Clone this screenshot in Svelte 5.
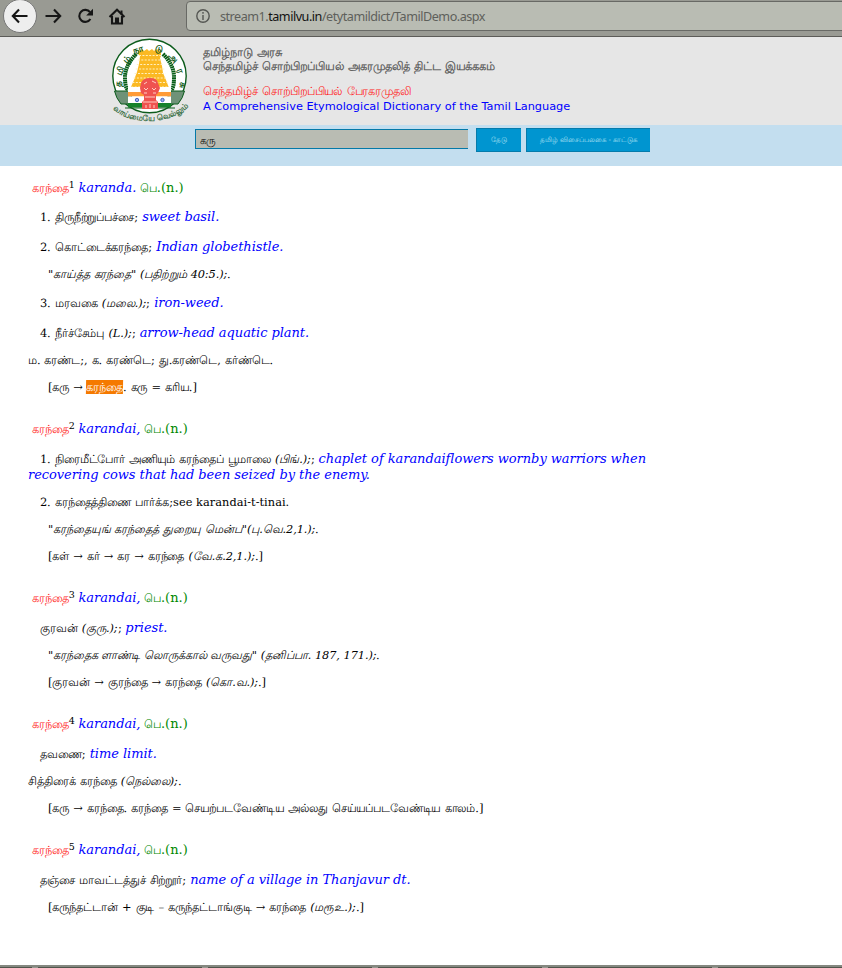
<script>
  const B = (t) => ({ k: 'en', t });
  const T = (t) => ({ k: 'ta', t });
  const I = (t) => ({ k: 'it', t });
  const H = (t) => ({ k: 'hit', t });
  const entries = [
    { n: 1, en: 'karanda.', lines: [
      { c: 'sense big tight', s: [T('1. திருநீற்றுப்பச்சை; '), B('sweet basil.')] },
      { c: 'sense big', s: [T('2. கொட்டைக்கரந்தை; '), B('Indian globethistle.')] },
      { c: 'quote', s: [I('"காய்த்த கரந்தை" (பதிற்றும் 40:5.);'), T('.')] },
      { c: 'sense big tight', s: [T('3. மரவகை '), I('(மலை.);'), T('; '), B('iron-weed.')] },
      { c: 'sense big', s: [T('4. நீர்ச்சேம்பு '), I('(L.);'), T('; '), B('arrow-head aquatic plant.')] },
      { c: 'plain', s: [T('ம. கரண்ட;, க. கரண்டெ; து.கரண்டெ, கர்ண்டெ.')] },
      { c: 'quote', s: [T('[கரு → '), H('கரந்தை'), T('. கரு = கரிய.]')] }
    ] },
    { n: 2, en: 'karandai,', lines: [
      { c: 'sense big', s: [T('1. நிரைமீட்போர் அணியும் கரந்தைப் பூமாலை '), I('(பிங்.);'), T('; '), B('chaplet of karandaiflowers wornby warriors when')] , cont: 'recovering cows that had been seized by the enemy.' },
      { c: 'sense', s: [T('2. கரந்தைத்திணை பார்க்க;'), { k: 'see', t: 'see karandai-t-tinai.' }] },
      { c: 'quote', s: [I('"கரந்தையுங் கரந்தைத் துறையு மென்ப"(பு.வெ.2,1.);'), T('.')] },
      { c: 'quote', s: [T('[கள் → கர் → கர → கரந்தை '), I('(வே.க.2,1.);'), T('.]')] }
    ] },
    { n: 3, en: 'karandai,', lines: [
      { c: 'sense big', s: [T('குரவன் '), I('(குரு.);'), T('; '), B('priest.')] },
      { c: 'quote', s: [I('"கரந்தைக ளாண்டி லொருக்கால் வருவது" (தனிப்பா. 187, 171.);'), T('.')] },
      { c: 'quote', s: [T('[குரவன் → குரந்தை → கரந்தை '), I('(கொ.வ.);'), T('.]')] }
    ] },
    { n: 4, en: 'karandai,', lines: [
      { c: 'sense big', s: [T('தவணை; '), B('time limit.')] },
      { c: 'plain', s: [T('சித்திரைக் கரந்தை '), I('(நெல்லை);'), T('.')] },
      { c: 'quote', s: [T('[கரு → கரந்தை. கரந்தை = செயற்படவேண்டிய அல்லது செய்யப்படவேண்டிய காலம்.]')] }
    ] },
    { n: 5, en: 'karandai,', lines: [
      { c: 'sense big', s: [T('தஞ்சை மாவட்டத்துச் சிற்றூர்; '), B('name of a village in Thanjavur dt.')] },
      { c: 'quote', s: [T('[கருந்தட்டான் + குடி – கருந்தட்டாங்குடி → கரந்தை '), I('(மரூஉ.);'), T('.]')] }
    ] }
  ];
  // glyph, x, y and rotation around the rim of the seal
  const ring = [['த', 16, 47, -88], ['மி', 18, 35, -68], ['ழ்', 24, 24.5, -46], ['நா', 34, 15.5, -18], ['டு', 53.5, 14.5, 14], ['அ', 66, 23, 44], ['ர', 72.5, 35, 68], ['சு', 75, 48, 92]];
  const tiers = [0, 1, 2, 3, 4, 5, 6, 7];
</script>

<div class="page">
  <header class="chrome">
    <div class="back">
      <svg width="18" height="16" viewBox="0 0 18 16"><path d="M8 1.5 1.8 8 8 14.5M2 8h14.5" /></svg>
    </div>
    <svg class="fwd" width="18" height="16" viewBox="0 0 18 16"><path d="M10 1.5 16.2 8 10 14.5M16 8H1.5" /></svg>
    <svg class="reload" width="17" height="16" viewBox="0 0 17 16"><path d="M13 4.2A6 6 0 1 0 13.4 11" /><path class="solid" d="M16 .8v6.8H9.2z" /></svg>
    <svg class="home" width="18" height="17" viewBox="0 0 18 17"><path d="M1.500 9 9 1.800 16.500 9M4 8v7.500h10V8" /><path class="solid" d="M7 9.500h4V15H7zM12.500 2.500h2v4h-2z" /></svg>
    <div class="url">
      <svg width="14" height="14" viewBox="0 0 14 14"><circle cx="7" cy="7" r="6.2" /><path d="M7 6v5M7 3v1.7" /></svg>
      <span class="addr">stream1.<b>tamilvu.in</b>/etytamildict/TamilDemo.aspx</span>
    </div>
  </header>

  <div class="banner">
    <svg class="seal" width="90" height="88" viewBox="0 0 90 88">
      <circle cx="44.5" cy="39" r="36.7" fill="#fff" stroke="#0c5c1c" stroke-width="1.4" />
      <path d="M9.500 54h17v13H16q-5-6-6.500-13zM79.500 54H63v13h10q5-6 6.500-13z" fill="#6f9278" stroke="#0c5c1c" />
      <path d="M31 17Q20 29 20 40t3 13M58 17q11 11 11 23t-3 13" fill="none" stroke="#075d17" stroke-width="4" stroke-dasharray="1.700 .5" />
      <path d="M33 13l2 1 2-2 2 2 3-2 2 2 3-2 2 2 3-2 2 2 2-1v6l-1 2 2 8 1 7 3 7 3 8 2 4H23l3-5 3-7 3-8 2-8 1-8-2-2z" fill="#fbb923" />
      {#each tiers as t}
        <path d="M{34 - t * 1.1} {18.5 + t * 4.5}h{22 + t * 2.2}" stroke="#fff0c0" stroke-width="1" stroke-dasharray="2 1.4" />
      {/each}
      <path d="M23 50h43v5H23z" fill="#fff" />
      <path d="M23 55h43v4.500H23z" fill="#ff9b37" />
      <path d="M23 59.500h43V66H23z" fill="#fff" />
      <path d="M23 66h43v4.500H23z" fill="#16822b" />
      <path d="M20 71h50" stroke="#0c5c1c" />
      <circle cx="32" cy="63" r="1.700" fill="#9db0e4" stroke="#4565c0" /><circle cx="57.500" cy="63" r="1.700" fill="#9db0e4" stroke="#4565c0" />
      <path d="M36 46q2-5 9-5t8 5l2 5-2 5-2 2v5l2 2v7H37v-7l2-2v-5l-3-2-1-5z" fill="#ef5350" />
      <path d="M39 47l3-2M47 44l4 2M39 51l2 2 2-2M47 51l2 2 2-2M39 56h3M48 56h3M40 60h10M38 65h14M41 68v3M45 67v4M49 68v3" stroke="#ffd0c4" stroke-width="1" fill="none" />
      {#each ring as r}
        <text x="0" y="0" transform="translate({r[1]} {r[2]}) rotate({r[3]})" class="ringtext">{r[0]}</text>
      {/each}
      <path id="motto" d="M8 72C24 88 64 88 82 71" fill="none" />
      <text class="motto"><textPath href="#motto" startOffset="0" textLength="82" lengthAdjust="spacingAndGlyphs">வாய்மையே வெல்லும்</textPath></text>
    </svg>
    <div class="titles">
      <div class="g">தமிழ்நாடு அரசு</div>
      <div class="g">செந்தமிழ்ச் சொற்பிறப்பியல் அகரமுதலித் திட்ட இயக்ககம்</div>
      <div class="r">செந்தமிழ்ச் சொற்பிறப்பியல் பேரகரமுதலி</div>
      <div class="b">A Comprehensive Etymological Dictionary of the Tamil Language</div>
    </div>
  </div>

  <div class="search">
    <div class="field"><span>கரு</span></div>
    <div class="btn find"><span>தேடு</span></div>
    <div class="btn keys"><span>தமிழ் விசைப்பலகை - காட்டுக</span></div>
  </div>

  <main>
    {#each entries as e}
      <section>
        <div class="line big head"><span class="word">கரந்தை</span><span class="num">{e.n}</span> <span class="en">{e.en}</span> <span class="pos"><span class="pe">பெ</span>.(n.)</span></div>
        {#each e.lines as l}
          <div class="line {l.c}">{#each l.s as s}<span class={s.k}>{s.t}</span>{/each}</div>
          {#if l.cont}<div class="line big cont"><span class="en">{l.cont}</span></div>{/if}
        {/each}
      </section>
    {/each}
  </main>
  <footer><i></i><i></i><i></i><i></i><i></i></footer>
</div>

<style>
  :global(body) { margin: 0; background: #fff; }
  .page { width: 842px; height: 968px; display: flex; flex-direction: column; overflow: hidden; background: #fff; }
  .chrome { box-sizing: border-box; height: 37px; flex: none; display: flex; align-items: flex-start; background: #999a93; border-bottom: 1px solid #5c5b58; }
  .chrome svg { fill: none; stroke: #161616; stroke-width: 2.1; flex: none; }
  .chrome .solid { fill: #161616; stroke: none; }
  .back { box-sizing: border-box; width: 34px; height: 34px; margin: -1px 0 0 3px; border: 1px solid #777; border-radius: 50%; background: #eee; display: flex; align-items: center; justify-content: center; }
  .fwd { margin: 8px 0 0 7px; }
  .reload { margin: 8px 0 0 15px; }
  .home { margin: 8px 0 0 14px; }
  .url { box-sizing: border-box; height: 30px; margin: 1px -6px 0 60px; flex: 1; border: 1px solid #686965; border-radius: 4px; background: #b9bcb3; display: flex; align-items: center; padding-left: 9px; gap: 10px; }
  .chrome .url svg { stroke: #555753; stroke-width: 1.4; }
  .addr { font: 12.6px "Noto Sans", "Open Sans", sans-serif; letter-spacing: -.48px; color: #5e605b; white-space: nowrap; }
  .addr b { font-weight: 400; color: #111; }
  .banner { height: 88px; flex: none; display: flex; background: #e6e6e6; }
  .seal { margin-left: 105px; flex: none; }
  .ringtext { font: 700 9px "Lohit Tamil", "DejaVu Sans", sans-serif; fill: #125c20; text-anchor: middle; }
  .motto { font: 700 8px "Lohit Tamil", "DejaVu Sans", sans-serif; fill: #3c7148; }
  .titles { margin: 8px 0 0 8px; font-family: "DejaVu Sans", sans-serif; white-space: nowrap; line-height: 14px; font-size: 11.33px; }
  .g, .r, .field span, .btn span, .ta, .word, .hit, .pe { transform: skewX(-1deg); }
  .g, .r { width: max-content; }
  .g { color: #555; -webkit-text-stroke: .25px #555; letter-spacing: .05px; word-spacing: .3px; }
  .r { color: #f22; margin-top: 11px; letter-spacing: -.05px; word-spacing: .6px; }
  .b { color: #00f; line-height: 16px; }
  .search { height: 41px; flex: none; background: #c3deef; display: flex; align-items: flex-start; font-family: "DejaVu Sans", sans-serif; }
  .field span, .btn span { display: inline-block; }
  .field { box-sizing: border-box; width: 273px; height: 20px; margin: 4px 0 0 195px; border: 1px solid #0479a8; border-right: 0; background: #b9bcb3; color: #111; font-size: 10.4px; line-height: 20px; padding-left: 4px; }
  .btn { box-sizing: border-box; height: 24px; margin-top: 3px; border: 1px solid #057bab; border-right: 0; background: #0095d0; color: #b4e2f5; font-size: 7px; line-height: 23px; text-align: center; white-space: nowrap; }
  .find { width: 45px; margin-left: 8px; }
  .keys { width: 124px; margin-left: 5px; }
  main { flex: 1; padding: 14px 0 0 28px; font-family: "DejaVu Serif", serif; font-size: 11.33px; color: #000; min-height: 0; }
  section { margin-bottom: 26px; }
  .line { height: 13px; line-height: 11px; margin-bottom: 14px; white-space: pre; }
  .big { height: 16px; line-height: 16px; }
  .head { padding-left: 4px; }
  .sense { padding-left: 12px; }
  .quote { padding-left: 20px; }
  .tight { margin-top: -15px; padding-top: 14px; }
  .cont { margin-top: -14px; }
  .en { color: #00f; font-style: italic; font-size: 13px; letter-spacing: -.05px; }
  .ta, .word, .hit, .pe { display: inline-block; }
  .ta { letter-spacing: -.05px; word-spacing: .5px; }
  .it { font-style: italic; letter-spacing: -.1px; word-spacing: .3px; }
  .see { letter-spacing: .05px; }
  .word { color: #f22; letter-spacing: -.05px; }
  .num { font-size: 9.5px; position: relative; top: -4px; }
  .pos { color: #080; font-size: 13px; }
  .pe { font-size: 11.33px; }
  .hit { background: #f57900; color: #fff; line-height: 14px; margin: -2px 0 -1px -1px; }
  footer { height: 3px; flex: none; box-sizing: border-box; border-top: 2px solid #858880; background: #50554b; display: flex; gap: 164px; padding-left: 32px; }
  footer i { width: 6px; height: 1px; background: #999a93; }
</style>
